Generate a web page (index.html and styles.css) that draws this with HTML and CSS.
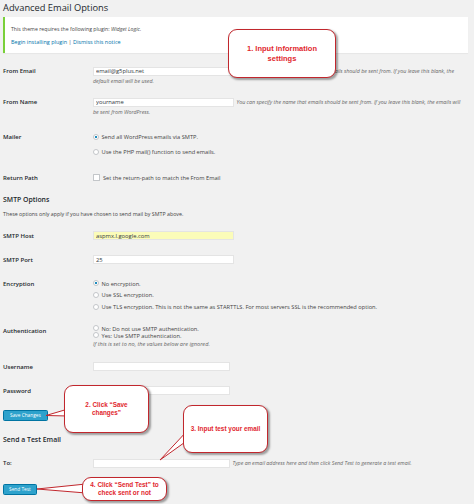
FILE: index.html
```html
<!DOCTYPE html>
<html lang="en">
  <head>
    <meta charset="UTF-8" />
    <title>Advanced Email Options</title>
    <link rel="stylesheet" href="styles.css">
  </head>
  <body>
    <div class="wrap">
      <h1>Advanced Email Options</h1>

      <!-- Plugin notice -->
      <div class="notice">
        <p>This theme requires the following plugin: <em>Widget Logic</em>.</p>
        <p class="actions"><a href="#">Begin installing plugin</a> | <a href="#">Dismiss this notice</a></p>
      </div>

      <!-- General settings -->
      <div class="form-table general">
        <div class="th">From Email</div>
        <div class="td">
          <input class="regular-text" type="text" value="email@g5plus.net">
          <span class="description">You can specify the email address that emails should be sent from. If you leave this blank, the default email will be used.</span>
        </div>

        <div class="th">From Name</div>
        <div class="td">
          <input class="regular-text" type="text" value="yourname">
          <span class="description">You can specify the name that emails should be sent from. If you leave this blank, the emails will be sent from WordPress.</span>
        </div>

        <div class="th">Mailer</div>
        <div class="td choices mailer">
          <label><input type="radio" name="mailer" checked>Send all WordPress emails via SMTP.</label>
          <label><input type="radio" name="mailer">Use the PHP mail() function to send emails.</label>
        </div>

        <div class="th">Return Path</div>
        <div class="td">
          <label><input type="checkbox">Set the return-path to match the From Email</label>
        </div>
      </div>

      <h2>SMTP Options</h2>
      <p class="intro">These options only apply if you have chosen to send mail by SMTP above.</p>

      <div class="form-table smtp">
        <div class="th">SMTP Host</div>
        <div class="td"><input class="regular-text autofill" type="text" value="aspmx.l.google.com"></div>

        <div class="th">SMTP Port</div>
        <div class="td"><input class="regular-text" type="text" value="25"></div>

        <div class="th">Encryption</div>
        <div class="td choices encryption">
          <label><input type="radio" name="enc" checked>No encryption.</label>
          <label><input type="radio" name="enc">Use SSL encryption.</label>
          <label><input type="radio" name="enc">Use TLS encryption. This is not the same as STARTTLS. For most servers SSL is the recommended option.</label>
        </div>

        <div class="th">Authentication</div>
        <div class="td choices auth">
          <label><input type="radio" name="auth">No: Do not use SMTP authentication.</label>
          <label><input type="radio" name="auth">Yes: Use SMTP authentication.</label>
          <span class="note">If this is set to no, the values below are ignored.</span>
        </div>

        <div class="th">Username</div>
        <div class="td"><input class="small-text" type="text"></div>

        <div class="th">Password</div>
        <div class="td"><input class="small-text" type="password"></div>
      </div>

      <button class="button save">Save Changes</button>

      <h2 class="test-title">Send a Test Email</h2>

      <div class="form-table test">
        <div class="th">To:</div>
        <div class="td">
          <input class="small-text" type="text">
          <span class="description">Type an email address here and then click Send Test to generate a test email.</span>
        </div>
      </div>

      <button class="button send">Send Test</button>

      <!-- Tutorial callouts drawn over the page -->
      <svg class="tails" width="474" height="504" viewBox="0 0 474 504">
        <polygon points="68,409 46,415.5 68,416" />
        <polygon points="188,430 160,460 188,440" />
        <polygon points="86,484 37,489 86,493" />
      </svg>
      <div class="callout c1">1. Input information<br>settings</div>
      <div class="callout c2">2. Click “Save<br>changes”</div>
      <div class="callout c3">3. Input test your email</div>
      <div class="callout c4">4. Click “Send Test” to<br>check sent or not</div>
    </div>
  </body>
</html>
```
FILE: styles.css
```css
body {
  margin: 0;
  background-color: #f1f1f1;
  font-family: "Open Sans", "DejaVu Sans", sans-serif;
  color: #444;
}
.wrap {
  position: relative;
  height: 504px;
  padding: 0 6px 0 3px;
  overflow: hidden;
}
h1 {
  margin: 0;
  font-size: 9.3px;
  font-weight: 400;
  line-height: 15px;
  color: #23282d;
}
/* Notice box */
.notice {
  margin-top: 2px;
  padding: 9px 6px 8px;
  background: #fff;
  border-left: 2px solid #7ad03a;
  box-shadow: 0 1px 1px rgba(0,0,0,0.04);
}
.notice p {
  margin: 0;
  font-size: 5.2px;
  line-height: 6px;
}
.notice .actions {
  margin-top: 7px;
  font-size: 5.5px;
}
.notice a {
  color: #0073aa;
  text-decoration: none;
}
h2 {
  margin: 12px 0 0;
  font-size: 6.9px;
  font-weight: 600;
  line-height: 10px;
  color: #23282d;
}
.intro {
  margin: 5px 0 0;
  font-size: 5.3px;
  line-height: 8px;
}
/* Form tables */
.form-table {
  display: grid;
  grid-template-columns: 90px 1fr;
}
.form-table .th {
  font-size: 6px;
  font-weight: 600;
  line-height: 10px;
  color: #23282d;
}
.form-table .td {
  padding-right: 4px;
  font-size: 5.7px;
  line-height: 10px;
}
.general {
  margin-top: 13px;
  grid-template-rows: 31px 35px 41px 10px;
}
.smtp {
  margin-top: 12.5px;
  grid-template-rows: 24px 24px 47px 36px 24px 10px;
}
.test {
  margin-top: 13px;
}
.regular-text,
.small-text {
  box-sizing: border-box;
  width: 141px;
  height: 9px;
  margin: 0 1px 0 0;
  padding: 0 2px;
  border: 1px solid #e4e4e4;
  background: #fff;
  font-family: "Open Sans", sans-serif;
  font-size: 5.8px;
  color: #32373c;
  vertical-align: middle;
  outline: none;
}
.small-text {
  width: 137px;
}
.autofill {
  background: #fbfcb9;
}
.description {
  font-size: 5.3px;
  font-style: italic;
  color: #666;
}
/* Radios and checkbox */
.choices {
  display: flex;
  flex-direction: column;
}
.choices label {
  display: block;
}
.mailer {
  gap: 4.7px;
}
.encryption {
  gap: 1.7px;
}
.auth label {
  line-height: 7px;
}
.auth .note {
  font-size: 5.6px;
  font-style: italic;
  line-height: 9px;
  color: #666;
}
input[type=radio],
input[type=checkbox] {
  appearance: none;
  box-sizing: border-box;
  width: 6px;
  height: 6px;
  margin: 0 2.5px 0 0;
  border: 1px solid #c3c6c9;
  border-radius: 50%;
  background: #fff;
  vertical-align: middle;
  position: relative;
  top: -0.5px;
}
input[type=radio]:checked {
  background: radial-gradient(circle, #1e8cbe 0 1px, #fff 1.4px);
}
input[type=checkbox] {
  width: 7px;
  height: 7px;
  margin-right: 3px;
  border-radius: 0.5px;
}
/* Buttons */
.button {
  display: block;
  box-sizing: border-box;
  height: 11px;
  padding: 0 6px;
  border: 1px solid #0074a2;
  border-radius: 1.5px;
  background: #2ea2cc;
  color: #fff;
  font-family: "Open Sans", sans-serif;
  font-size: 4.8px;
  line-height: 9px;
}
.save {
  margin-top: 14.5px;
}
.send {
  margin-top: 16px;
  height: 10.5px;
  padding: 0 5px;
}
.test-title {
  margin-top: 14px;
}
/* Callouts */
.tails {
  position: absolute;
  left: 0;
  top: 0;
  pointer-events: none;
}
.tails polygon {
  fill: #fff;
  stroke: #c1272d;
  stroke-width: 1;
}
.callout {
  position: absolute;
  box-sizing: border-box;
  display: flex;
  align-items: center;
  justify-content: center;
  text-align: center;
  background: #fff;
  border: 1.5px solid #c1272d;
  border-radius: 9px;
  box-shadow: 1.5px 1.5px 2px rgba(0,0,0,0.35);
  color: #e1262d;
  font-family: "Liberation Sans", Arial, sans-serif;
  font-weight: bold;
  font-size: 6.4px;
  line-height: 8.5px;
}
.c1 {
  left: 228px;
  top: 29px;
  width: 108px;
  height: 49px;
  font-size: 7.5px;
  line-height: 9.5px;
}
.c2 {
  left: 64px;
  top: 385px;
  width: 85px;
  height: 48px;
}
.c3 {
  left: 183px;
  top: 405px;
  width: 85px;
  height: 48px;
}
.c4 {
  left: 82px;
  top: 477px;
  width: 85px;
  height: 24px;
}
```
